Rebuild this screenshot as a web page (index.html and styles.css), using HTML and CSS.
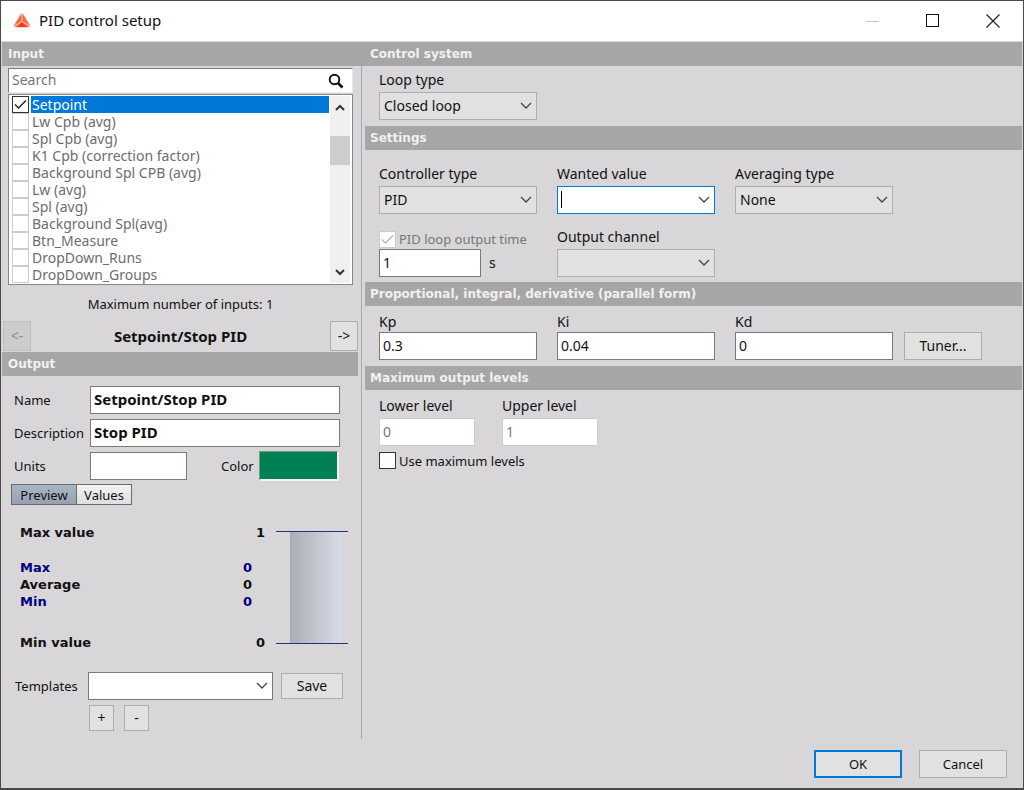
FILE: index.html
```html
<!DOCTYPE html>
<html lang="en">
<head>
<meta charset="utf-8">
<title>PID control setup</title>
<link rel="stylesheet" href="styles.css">
</head>
<body>
<div class="window">
  <header class="titlebar">
    <svg class="logo" width="18" height="16" viewBox="0 0 18 16" aria-hidden="true">
      <path d="M7.2 1.6 Q9 -0.4 10.8 1.6 L17 12 Q17.6 14.4 15 14.6 H3 Q0.4 14.4 1 12 Z" fill="#f9a58c"/>
      <path d="M8.3 1.5 L8.2 8.2 L1.5 12 Z M9.7 1.5 L9.8 8.2 L16.5 12 Z" fill="#f26a45"/>
      <path d="M9 9.2 L15 14 H3 Z" fill="#ec3f14"/>
    </svg>
    <h1 class="title">PID control setup</h1>
    <button class="win-btn" disabled aria-label="Minimize"><svg width="14" height="14"><path d="M0 7.500H13" stroke="#c4c4c4"/></svg></button>
    <button class="win-btn" aria-label="Maximize"><svg width="14" height="14"><rect x=".5" y=".5" width="12" height="12" fill="none" stroke="#111"/></svg></button>
    <button class="win-btn" aria-label="Close"><svg width="14" height="14"><path d="M.5 .5L13.500 13.500M13.500 .5L.5 13.500" stroke="#222" stroke-width="1.200"/></svg></button>
  </header>

  <div class="top-bars">
    <h2 class="bar bar-input">Input</h2>
    <h2 class="bar bar-system">Control system</h2>
  </div>

  <div class="columns">
    <aside class="left">
      <div class="search">
        <input type="text" placeholder="Search" aria-label="Search">
        <svg width="16" height="16" viewBox="0 0 16 16" fill="none" stroke="#111"><circle cx="6.500" cy="6.500" r="4.800" stroke-width="1.900"/><path d="M10 10L14.500 14.500" stroke-width="2.600"/></svg>
      </div>
      <div class="list">
        <div class="items">
          <label class="item selected"><input type="checkbox" checked><span>Setpoint</span></label>
          <label class="item"><input type="checkbox"><span>Lw Cpb (avg)</span></label>
          <label class="item"><input type="checkbox"><span>Spl Cpb (avg)</span></label>
          <label class="item"><input type="checkbox"><span>K1 Cpb (correction factor)</span></label>
          <label class="item"><input type="checkbox"><span>Background Spl CPB (avg)</span></label>
          <label class="item"><input type="checkbox"><span>Lw (avg)</span></label>
          <label class="item"><input type="checkbox"><span>Spl (avg)</span></label>
          <label class="item"><input type="checkbox"><span>Background Spl(avg)</span></label>
          <label class="item"><input type="checkbox"><span>Btn_Measure</span></label>
          <label class="item"><input type="checkbox"><span>DropDown_Runs</span></label>
          <label class="item"><input type="checkbox"><span>DropDown_Groups</span></label>
        </div>
        <div class="scrollbar">
          <button aria-label="Scroll up"><svg width="10" height="7"><path d="M1 6L5 2L9 6" fill="none" stroke="#333" stroke-width="2"/></svg></button>
          <div class="track"><div class="thumb"></div></div>
          <button aria-label="Scroll down"><svg width="10" height="7"><path d="M1 1L5 5L9 1" fill="none" stroke="#333" stroke-width="2"/></svg></button>
        </div>
      </div>
      <p class="max-inputs">Maximum number of inputs: 1</p>
      <div class="pager">
        <button class="btn" disabled>&lt;-</button>
        <strong class="bold">Setpoint/Stop PID</strong>
        <button class="btn">-&gt;</button>
      </div>
      <h2 class="bar bar-output">Output</h2>
      <div class="output">
        <label for="name">Name</label>
        <input class="box bold wide" id="name" type="text" value="Setpoint/Stop PID">
        <label for="desc">Description</label>
        <input class="box bold wide" id="desc" type="text" value="Stop PID">
        <label for="units">Units</label>
        <input class="box" id="units" type="text">
        <label class="color-label" for="color">Color</label>
        <button class="swatch" id="color" aria-label="Color"></button>
      </div>
      <div class="tabs">
        <button class="tab active">Preview</button><button class="tab">Values</button>
      </div>
      <div class="preview">
        <dl class="stats">
          <div class="stat"><dt>Max value</dt><dd>1</dd></div>
          <div class="readings">
            <div class="stat navy"><dt>Max</dt><dd>0</dd></div>
            <div class="stat"><dt>Average</dt><dd>0</dd></div>
            <div class="stat navy"><dt>Min</dt><dd>0</dd></div>
          </div>
          <div class="stat"><dt>Min value</dt><dd>0</dd></div>
        </dl>
        <div class="gauge"><div class="level"></div></div>
      </div>
      <div class="templates">
        <label for="tpl">Templates</label>
        <div class="combo light">
          <select id="tpl"><option></option></select>
          <svg width="12" height="8"><path d="M1 1L6 6L11 1"/></svg>
        </div>
        <button class="btn save">Save</button>
        <div class="plus-minus">
          <button class="btn">+</button>
          <button class="btn">-</button>
        </div>
      </div>
    </aside>

    <main class="right">
      <section class="fields system">
        <div class="field">
          <label for="loop">Loop type</label>
          <div class="combo"><select id="loop"><option>Closed loop</option></select><svg width="12" height="8"><path d="M1 1L6 6L11 1"/></svg></div>
        </div>
      </section>

      <h2 class="bar">Settings</h2>
      <section class="fields settings">
        <div class="field">
          <label for="ctype">Controller type</label>
          <div class="combo"><select id="ctype"><option>PID</option></select><svg width="12" height="8"><path d="M1 1L6 6L11 1"/></svg></div>
        </div>
        <div class="field">
          <label for="wanted">Wanted value</label>
          <div class="combo focus"><input id="wanted" type="text"><i class="caret"></i><svg width="12" height="8"><path d="M1 1L6 6L11 1"/></svg></div>
        </div>
        <div class="field">
          <label for="avg">Averaging type</label>
          <div class="combo"><select id="avg"><option>None</option></select><svg width="12" height="8"><path d="M1 1L6 6L11 1"/></svg></div>
        </div>
        <div class="field">
          <label class="check muted"><input type="checkbox" checked disabled>PID loop output time</label>
          <div class="time"><input class="box" type="text" value="1" aria-label="PID loop output time"><span>s</span></div>
        </div>
        <div class="field">
          <label for="channel">Output channel</label>
          <div class="combo"><select id="channel"><option></option></select><svg width="12" height="8"><path d="M1 1L6 6L11 1"/></svg></div>
        </div>
      </section>

      <h2 class="bar">Proportional, integral, derivative (parallel form)</h2>
      <section class="fields gains">
        <div class="field"><label for="kp">Kp</label><input class="box" id="kp" type="text" value="0.3"></div>
        <div class="field"><label for="ki">Ki</label><input class="box" id="ki" type="text" value="0.04"></div>
        <div class="field"><label for="kd">Kd</label><input class="box" id="kd" type="text" value="0"></div>
        <button class="btn tuner">Tuner...</button>
      </section>

      <h2 class="bar">Maximum output levels</h2>
      <section class="levels">
        <div class="field"><label for="low">Lower level</label><input class="box" id="low" type="text" value="0" disabled></div>
        <div class="field"><label for="up">Upper level</label><input class="box" id="up" type="text" value="1" disabled></div>
        <label class="check"><input type="checkbox">Use maximum levels</label>
      </section>
    </main>
  </div>

  <footer class="actions">
    <button class="btn ok">OK</button>
    <button class="btn">Cancel</button>
  </footer>
</div>
</body>
</html>
```
FILE: styles.css
```css
* { box-sizing: border-box; }

body {
  margin: 0;
  background: #d8d6d8;
  color: #111;
  font: 14px/16px "Noto Sans", "Open Sans", sans-serif;
}

h1, h2, p, dl, dd { margin: 0; }

input, select, button { font: inherit; color: inherit; margin: 0; }

.window {
  display: flex;
  flex-direction: column;
  min-height: 100vh;
  border: 1px solid #4a484a;
  border-bottom-width: 2px;
}

.titlebar {
  display: flex;
  align-items: center;
  height: 40px;
  padding-left: 12px;
  background: #fff;
}

.title {
  flex: 1;
  margin-left: 8px;
  padding-bottom: 2px;
  font-size: 15px;
  font-weight: 400;
}

.win-btn {
  display: grid;
  place-items: center;
  width: 60px;
  height: 40px;
  padding: 0;
  border: 0;
  background: none;
}

.bar {
  height: 24px;
  padding-left: 5px;
  background: #a6a6a6;
  color: #f2f0f0;
  font: bold 12px/25px "DejaVu Sans", sans-serif;
}

.bold { font-size: 15px; font-weight: 700; }

.top-bars { display: flex; padding: 1px 1px 0; }
.bar-input { width: 361px; padding-left: 6px; }
.bar-system { flex: 1; padding-left: 7px; }

.columns { display: flex; flex: 1; }

.left {
  display: flex;
  flex-direction: column;
  width: 361px;
  padding: 2px 3px 8px 2px;
  border-right: 1px solid #a9a7a9;
}

.search {
  display: flex;
  align-items: center;
  height: 25px;
  margin: 0 5px 1px;
  padding-right: 8px;
  border: 1px solid #7a7a7a;
  border-right-color: #e8e8e8;
  border-bottom-color: #e8e8e8;
  background: #fff;
}

.search input {
  flex: 1;
  min-width: 0;
  padding: 0 3px 2px;
  border: 0;
  outline: 0;
  background: none;
}

.search input::placeholder { color: #757575; }

.list {
  display: flex;
  height: 191px;
  margin: 0 5px;
  padding: 1px 2px;
  border: 1px solid #828790;
  background: #fff;
}

.items { flex: 1; }

.item {
  display: flex;
  height: 17px;
  padding-left: 1px;
  color: #6d6d6d;
  line-height: 17px;
}

.item span { flex: 1; margin-left: 2px; padding-left: 1px; }
.item.selected span { background: #0078d7; color: #fff; }

input[type="checkbox"] {
  appearance: none;
  flex: none;
  width: 17px;
  height: 17px;
  border: 1px solid #333;
  background: #fff;
}

input[type="checkbox"]:checked {
  background: #fff url("data:image/svg+xml,%3Csvg xmlns='http://www.w3.org/2000/svg' width='15' height='15'%3E%3Cpath d='M2 7.500L5.500 11L13 3.500' fill='none' stroke='%23222' stroke-width='1.500'/%3E%3C/svg%3E") center no-repeat;
}

input[type="checkbox"]:disabled { border-color: #ccc; }

input[type="checkbox"]:checked:disabled {
  background-image: url("data:image/svg+xml,%3Csvg xmlns='http://www.w3.org/2000/svg' width='15' height='15'%3E%3Cpath d='M2 7.500L5.500 11L13 3.500' fill='none' stroke='%23b8b8b8' stroke-width='1.500'/%3E%3C/svg%3E");
}

.item:not(.selected) input { border-color: #ccc; }

.scrollbar {
  display: flex;
  flex-direction: column;
  width: 20px;
  margin-left: 1px;
  background: #f0f0f0;
}

.scrollbar button {
  display: grid;
  place-items: center;
  height: 22px;
  padding: 0;
  border: 0;
  background: none;
}

.track { flex: 1; padding-top: 18px; }
.thumb { height: 29px; background: #cdcdcd; }

.max-inputs { margin: 11px 0 9px; font-size: 13px; text-align: center; }

.pager {
  display: flex;
  justify-content: space-between;
  align-items: center;
  margin: 0 0 1px;
}

.btn {
  height: 26px;
  padding: 0;
  border: 1px solid #adadad;
  background: #e1e1e1;
}

.btn:disabled { color: #888; background: #ccc; border-color: #bfbfbf; }
.pager .btn { width: 28px; height: 30px; }

.bar-output { margin-left: -1px; padding-left: 6px; }

.output {
  display: grid;
  grid-template-columns: 74px 97px 68px 80px;
  grid-auto-rows: 28px;
  gap: 5px 2px;
  align-items: center;
  margin: 10px 10px 4px 11px;
}

.output label { font-size: 13px; }
.output .wide { grid-column: span 3; width: 250px; }

.box {
  width: 100%;
  min-width: 0;
  height: 28px;
  padding: 0 3px 2px;
  border: 1px solid #7a7a7a;
  border-radius: 0;
  background: #fff;
}

.box:disabled { border-color: #ccc; color: #777; }

.output .color-label { padding-left: 32px; }

.swatch {
  height: 30px;
  padding: 0;
  border: 1px solid #7a9a7a;
  border-right: 2px solid #f4f4f4;
  border-bottom: 2px solid #f4f4f4;
  background: #008055;
}

.tabs { display: flex; margin-left: 8px; }

.tab {
  width: 66px;
  height: 21px;
  padding: 0;
  border: 1px solid #6a6a6a;
  background: linear-gradient(#f4f4f4, #dedede);
  font-size: 13px;
}

.tab + .tab { width: 56px; margin-left: -1px; }
.tab.active { background: linear-gradient(#aab4c2, #96a2b2); }

.preview {
  display: flex;
  gap: 11px;
  margin: 19px 10px 21px 17px;
}

.stats {
  display: flex;
  flex: 1;
  flex-direction: column;
  justify-content: space-between;
  font: bold 13px/17px "DejaVu Sans", sans-serif;
}

.stat { display: flex; justify-content: space-between; }
.readings { padding: 0 13px 7px 0; }
.navy { color: #00007f; }

.gauge {
  width: 72px;
  height: 113px;
  margin: 7px 0;
  padding: 0 7px 0 14px;
  border: solid #2c2c7c;
  border-width: 1px 0;
}

.level {
  height: 100%;
  background: linear-gradient(90deg, #a9aeb6, #d6dbe5);
}

.templates {
  display: grid;
  grid-template-columns: 71px 185px 68px;
  gap: 5px 2px;
  align-items: center;
  margin-left: 12px;
}

.templates label { font-size: 13px; }
.save { margin-left: 6px; }

.plus-minus {
  display: flex;
  grid-column: 2;
  gap: 10px;
  padding-left: 1px;
}

.plus-minus .btn { width: 25px; }

.combo { position: relative; display: flex; }

.combo select, .combo input {
  appearance: none;
  width: 100%;
  height: 28px;
  padding: 0 4px;
  border: 1px solid #adadad;
  border-radius: 0;
  background: #e1e1e1;
}

.combo.light select { border-color: #7a7a7a; background: #fff; }
.combo.focus input { border-color: #0078d7; background: #fff; outline: 0; }

.combo svg {
  position: absolute;
  top: 10px;
  right: 5px;
  fill: none;
  stroke: #444;
  stroke-width: 1.3;
  pointer-events: none;
}

.caret {
  position: absolute;
  top: 5px;
  left: 4px;
  width: 1px;
  height: 17px;
  background: #000;
}

.right { flex: 1; padding: 6px 1px 0 3px; }

.fields {
  display: grid;
  grid-template-columns: repeat(3, 158px) 78px;
  column-gap: 20px;
  margin: 0 14px;
}

.field label { display: block; height: 20px; }
.system { margin-bottom: 6px; }

.settings {
  grid-template-columns: repeat(3, 158px);
  row-gap: 15px;
  margin-top: 16px;
  margin-bottom: 5px;
}

.check, .field label.check {
  display: flex;
  gap: 3px;
  align-items: center;
  font-size: 13px;
}

.muted { color: #777; }
.time { display: flex; gap: 8px; align-items: center; }
.time .box { width: 102px; }

.gains { margin-top: 6px; margin-bottom: 6px; }
.gains .field label { padding-top: 2px; }
.tuner { align-self: end; width: 78px; height: 28px; margin-left: -9px; }

.levels {
  display: grid;
  grid-template-columns: 96px 96px;
  gap: 6px 27px;
  margin: 8px 14px;
}

.levels .check { grid-column: span 2; }

.actions {
  display: flex;
  justify-content: flex-end;
  gap: 17px;
  padding: 11px 16px 10px;
}

.actions .btn { width: 88px; height: 28px; font-size: 13px; }
.actions .ok { border: 2px solid #0078d7; }
```
